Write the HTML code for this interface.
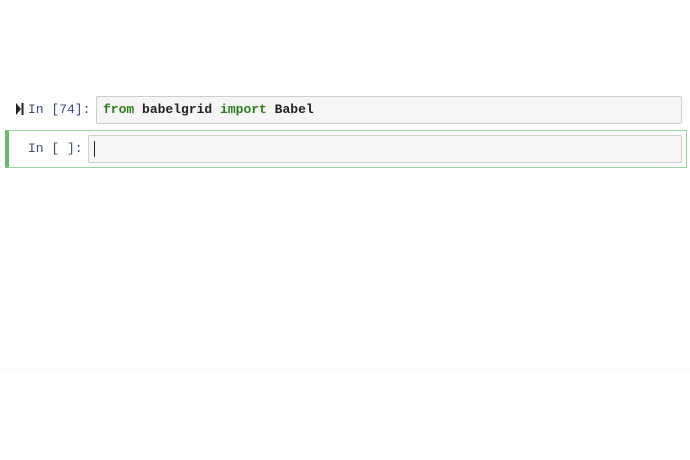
<!DOCTYPE html>
<html><head><style>
body{margin:0;width:690px;height:460px;background:#fff;position:relative;overflow:hidden;font-family:"Liberation Mono",monospace;}
.bg{position:absolute;left:0;top:0;width:690px;height:372px;background:#fefdfe;}
.box{position:absolute;background:#f5f5f5;border:1px solid #cfcfcf;border-radius:2px;box-sizing:border-box;}
.t{position:absolute;font-size:13px;line-height:16px;color:#3c4b7a;}
.code{position:absolute;font-size:13px;line-height:16px;color:#222;font-weight:bold;}
.k{color:#2e7d1e;}
</style></head><body>
<div class="bg"></div>
<svg style="position:absolute;left:16px;top:103px" width="8" height="12"><path d="M0 0 L5 6 L0 12Z" fill="#222"/><rect x="5.5" y="0" width="2" height="12" fill="#222"/></svg>
<div class="t" style="left:28px;top:102px">In [74]:</div>
<div class="box" style="left:96px;top:96px;width:586px;height:28px"></div>
<div class="code" style="left:103px;top:102px"><span class="k">from</span> babelgrid <span class="k">import</span> Babel</div>
<div style="position:absolute;left:5px;top:130px;width:682px;height:38px;border:1px solid #9dd39c;box-sizing:border-box;border-left:4px solid #66bb6a"></div>
<div class="t" style="left:28px;top:141px">In [ ]:</div>
<div class="box" style="left:88px;top:135px;width:594px;height:28px"></div>
<div style="position:absolute;left:94px;top:141px;width:1px;height:16px;background:#222"></div>
</body></html>
